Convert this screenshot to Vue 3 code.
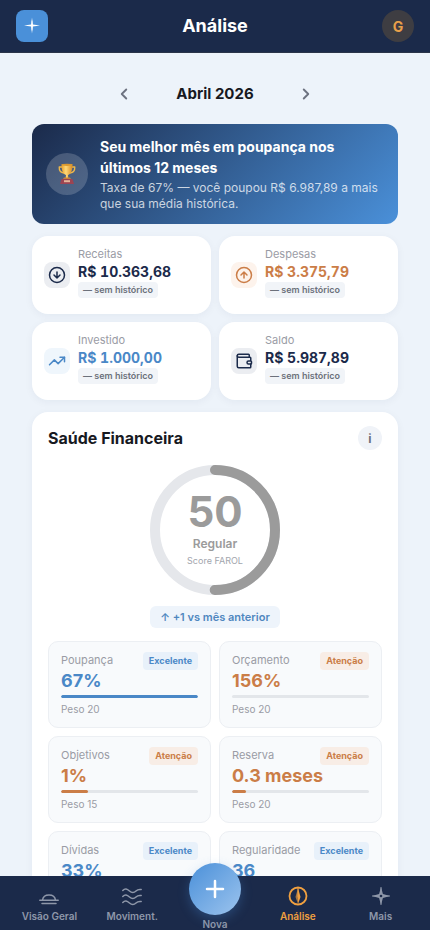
<script setup>
import { ref, computed } from 'vue'

const months = ['Janeiro', 'Fevereiro', 'Março', 'Abril', 'Maio', 'Junho', 'Julho', 'Agosto', 'Setembro', 'Outubro', 'Novembro', 'Dezembro']
const monthIndex = ref(2026 * 12 + 3)
const monthLabel = computed(() => `${months[monthIndex.value % 12]} ${Math.floor(monthIndex.value / 12)}`)

const totals = [
  { label: 'Receitas', value: 'R$ 10.363,68', tone: 'navy', icon: 'down' },
  { label: 'Despesas', value: 'R$ 3.375,79', tone: 'orange', icon: 'up' },
  { label: 'Investido', value: 'R$ 1.000,00', tone: 'blue', icon: 'trend' },
  { label: 'Saldo', value: 'R$ 5.987,89', tone: 'navy', icon: 'wallet' },
]

const score = 50
const circumference = 2 * Math.PI * 60
const dash = `${(circumference * score) / 100} ${circumference}`

const pillars = [
  { label: 'Poupança', value: '67%', status: 'Excelente', tone: 'blue', fill: 100, weight: 20 },
  { label: 'Orçamento', value: '156%', status: 'Atenção', tone: 'orange', fill: 0, weight: 20 },
  { label: 'Objetivos', value: '1%', status: 'Atenção', tone: 'orange', fill: 20, weight: 15 },
  { label: 'Reserva', value: '0.3 meses', status: 'Atenção', tone: 'orange', fill: 10, weight: 20 },
  { label: 'Dívidas', value: '33%', status: 'Excelente', tone: 'blue', fill: 100, weight: 15 },
  { label: 'Regularidade', value: '36', status: 'Excelente', tone: 'blue', fill: 100, weight: 10 },
]
</script>

<template>
  <div class="app">
    <header class="topbar">
      <a class="logo" href="#inicio" aria-label="Início">
        <svg width="18" height="18" viewBox="0 0 18 18" aria-hidden="true">
          <path d="M9 .5 9.900 7.600 17 8.500 9.900 9.400 9 16.500 8.100 9.400 1 8.500 8.100 7.600Z" fill="#fff" />
          <path d="M9 4v9M4.500 8.500h9" stroke="#fff" stroke-width="1" stroke-opacity=".7" />
        </svg>
      </a>
      <h1>Análise</h1>
      <button class="avatar" type="button">G</button>
    </header>

    <main class="content">
      <div class="month">
        <button type="button" aria-label="Mês anterior" @click="monthIndex--">
          <svg width="18" height="18" viewBox="0 0 24 24" aria-hidden="true"><path d="m15 18-6-6 6-6" /></svg>
        </button>
        <h2>{{ monthLabel }}</h2>
        <button type="button" aria-label="Próximo mês" @click="monthIndex++">
          <svg width="18" height="18" viewBox="0 0 24 24" aria-hidden="true"><path d="m9 18 6-6-6-6" /></svg>
        </button>
      </div>

      <section class="banner">
        <span class="trophy">
          <svg width="20" height="22" viewBox="0 0 20 22" aria-hidden="true">
            <defs>
              <linearGradient id="gold" x1="0" x2="1">
                <stop offset="0" stop-color="#e9a02c" />
                <stop offset=".4" stop-color="#ffd978" />
                <stop offset="1" stop-color="#d98a24" />
              </linearGradient>
            </defs>
            <path d="M5 4H2.200C2 8 3.500 9.600 7 10M15 4h2.800C18 8 16.500 9.600 13 10" fill="none" stroke="#eeb84c" stroke-width="1.300" stroke-linecap="round" />
            <path d="M4.500 1.500h11c0 5.500-1.400 9.500-4.500 10.500l.4 3.500h-2.800l.4-3.500C5.900 11 4.500 7 4.500 1.500Z" fill="url(#gold)" />
            <ellipse cx="10" cy="1.800" rx="5.500" ry="1.100" fill="#d9982f" />
            <path d="M7 14.500h6l1 1.500H6Z" fill="#c8813a" />
            <path d="M4.500 16h11l1.500 5h-14Z" fill="#9c4452" />
            <path d="M7 17.200h6v2H7Z" fill="#e6b59a" />
          </svg>
        </span>
        <div>
          <h3>Seu melhor mês em poupança nos últimos 12 meses</h3>
          <p>Taxa de 67% — você poupou R$ 6.987,89 a mais que sua média histórica.</p>
        </div>
      </section>

      <section class="totals" aria-label="Resumo do mês">
        <article v-for="t in totals" :key="t.label" class="total" :class="t.tone">
          <span class="total-icon">
            <svg width="18" height="18" viewBox="0 0 24 24" aria-hidden="true">
              <template v-if="t.icon === 'down'"><circle cx="12" cy="12" r="10" /><path d="M12 8v8M8 12l4 4 4-4" /></template>
              <template v-else-if="t.icon === 'up'"><circle cx="12" cy="12" r="10" /><path d="m16 12-4-4-4 4M12 16V8" /></template>
              <template v-else-if="t.icon === 'trend'"><path d="m22 7-8.500 8.500-5-5L2 17" /><path d="M16 7h6v6" /></template>
              <template v-else>
                <path d="M19 7V4a1 1 0 0 0-1-1H5a2 2 0 0 0 0 4h15a1 1 0 0 1 1 1v4h-3a2 2 0 0 0 0 4h3a1 1 0 0 0 1-1v-2a1 1 0 0 0-1-1" />
                <path d="M3 5v14a2 2 0 0 0 2 2h15a1 1 0 0 0 1-1v-4" />
              </template>
            </svg>
          </span>
          <div class="total-text">
            <span class="label">{{ t.label }}</span>
            <strong>{{ t.value }}</strong>
            <span class="delta">— sem histórico</span>
          </div>
        </article>
      </section>

      <section class="health">
        <div class="health-head">
          <h2>Saúde Financeira</h2>
          <button type="button" aria-label="Sobre o score">i</button>
        </div>

        <div class="gauge">
          <svg viewBox="0 0 130 130" aria-hidden="true">
            <circle cx="65" cy="65" r="60" class="track" />
            <circle cx="65" cy="65" r="60" class="arc" :stroke-dasharray="dash" transform="rotate(-90 65 65)" />
          </svg>
          <div class="gauge-text">
            <strong>{{ score }}</strong>
            <span class="rating">Regular</span>
            <span class="caption">Score FAROL</span>
          </div>
        </div>
        <p class="change">↑ +1 vs mês anterior</p>

        <div class="pillars">
          <article v-for="p in pillars" :key="p.label" class="pillar" :class="p.tone">
            <div class="pillar-head">
              <span class="label">{{ p.label }}</span>
              <span class="status">{{ p.status }}</span>
            </div>
            <strong>{{ p.value }}</strong>
            <div class="bar"><div class="fill" :style="{ width: p.fill + '%' }"></div></div>
            <span class="weight">Peso {{ p.weight }}</span>
          </article>
        </div>
      </section>
    </main>

    <nav class="tabs" aria-label="Principal">
      <a href="#geral">
        <svg width="20" height="20" viewBox="0 0 20 20" aria-hidden="true">
          <path d="M3.500 14C4 10.500 6.500 9 10 9s6 1.500 6.500 5M.8 14.200h18.400M3 17.500h14" />
        </svg>
        <span>Visão Geral</span>
      </a>
      <a href="#movimentos">
        <svg width="20" height="20" viewBox="0 0 20 20" aria-hidden="true">
          <path d="M.8 4.500C3 2 5 2.700 7.500 5s4.500 2 6.500 0 3-1.800 5.200-1.500M.8 10.500C3 8 5 8.700 7.500 11s4.500 2 6.500 0 3-1.800 5.200-1.500M.8 16.500C3 14 5 14.700 7.500 17s4.500 2 6.500 0 3-1.800 5.200-1.500" />
        </svg>
        <span>Moviment.</span>
      </a>
      <a href="#nova" class="new">
        <span class="fab">
          <svg width="24" height="24" viewBox="0 0 24 24" aria-hidden="true"><path d="M12 4v16M4 12h16" /></svg>
        </span>
        <span>Nova</span>
      </a>
      <a href="#analise" class="active" aria-current="page">
        <svg width="20" height="20" viewBox="0 0 20 20" aria-hidden="true">
          <circle cx="10" cy="10" r="8.500" stroke-width="1.800" />
          <path d="M10 2 12.500 11 10 18Z" fill="currentColor" stroke="none" />
          <path d="M10 2 7.500 11 10 18Z" fill="currentColor" fill-opacity=".65" stroke="none" />
          <path d="M10 2v9" stroke-width="1" />
        </svg>
        <span>Análise</span>
      </a>
      <a href="#mais">
        <svg width="20" height="20" viewBox="0 0 20 20" aria-hidden="true">
          <path d="M10 1 11.900 8.100 19 10 11.900 11.900 10 19 8.100 11.900 1 10 8.100 8.100Z" fill="currentColor" stroke="none" />
          <path d="M10 1.500v17M1.500 10h17" stroke-width="1" />
          <circle cx="10" cy="10" r="1.300" fill="#1b2a4a" stroke="none" />
        </svg>
        <span>Mais</span>
      </a>
    </nav>
  </div>
</template>

<style>
body {
  margin: 0;
  background: #edf3fa;
}
</style>

<style scoped>
.app {
  display: flex;
  flex-direction: column;
  height: 100vh;
  background: #edf3fa;
  color: #17191f;
  font-family: Inter, "Liberation Sans", sans-serif;
}
h1, h2, h3, p { margin: 0; }
button { border: 0; padding: 0; font: inherit; cursor: pointer; }
a { color: inherit; text-decoration: none; }
svg { display: block; fill: none; stroke-linecap: round; stroke-linejoin: round; }

.topbar {
  display: flex;
  flex: none;
  align-items: center;
  justify-content: space-between;
  padding: 10px 16px;
  border-bottom: 1px solid #2b3549;
  background: #1b2a4a;
}
.topbar h1 { color: #fff; font-size: 18px; font-weight: 700; line-height: 32px; }
.logo, .avatar {
  display: grid;
  place-items: center;
  width: 32px;
  height: 32px;
}
.logo { border-radius: 8px; background: #4a90d9; }
.avatar { border-radius: 50%; background: #3e3d42; color: #e9a04a; font-size: 14px; font-weight: 700; }

.content {
  flex: 1;
  min-height: 0;
  overflow-y: auto;
  scrollbar-width: none;
  padding: 23px 32px 32px;
}
.month { display: flex; align-items: center; justify-content: center; gap: 12px; margin-bottom: 12px; }
.month h2 { min-width: 122px; font-size: 15px; font-weight: 700; line-height: 36px; text-align: center; }
.month button { display: grid; place-items: center; width: 36px; height: 36px; background: none; }
.month svg { stroke: #6d7280; stroke-width: 2.5; }

.banner {
  display: flex;
  align-items: center;
  gap: 12px;
  padding: 12px 14px;
  border-radius: 12px;
  background: linear-gradient(135deg, #1b2a4a, #4a90d9);
}
.trophy {
  display: grid;
  flex: none;
  place-items: center;
  width: 42px;
  height: 42px;
  border-radius: 50%;
  background: rgba(255, 255, 255, 0.18);
}
.banner h3 { margin-bottom: 2px; color: #fff; font-size: 14px; font-weight: 700; line-height: 21px; }
.banner p { color: rgba(255, 255, 255, 0.75); font-size: 12px; line-height: 16px; }

.totals { display: grid; grid-template-columns: 1fr 1fr; gap: 8px; margin: 12px 0; }
.total {
  display: flex;
  align-items: center;
  gap: 8px;
  padding: 11px 12px;
  border-radius: 16px;
  background: #fff;
  box-shadow: 0 2px 8px rgba(27, 42, 74, 0.05);
}
.total-icon { display: grid; place-items: center; width: 26px; height: 26px; border-radius: 8px; background: #ebedf1; }
.total-icon svg { stroke: currentColor; stroke-width: 2; }
.total-text { display: flex; flex-direction: column; align-items: flex-start; padding-bottom: 5px; }
.label { color: #9a9ca5; font-size: 11px; line-height: 14px; }
.total strong { font-size: 14px; font-weight: 700; font-variant-numeric: tabular-nums; line-height: 21px; }
.delta {
  padding: 0 5px;
  border-radius: 4px;
  background: #f1f4f8;
  color: #6c717b;
  font-size: 9px;
  font-weight: 600;
  line-height: 16px;
}
.navy { color: #1b2a4a; }
.orange { color: #cb7d47; }
.blue { color: #4a88c7; }
.orange .total-icon { background: #fdf3ec; }
.blue .total-icon { background: #eff6fc; }

.health {
  padding: 14px 16px 16px;
  border-radius: 16px;
  background: #fff;
  box-shadow: 0 2px 8px rgba(27, 42, 74, 0.05);
}
.health-head { display: flex; align-items: center; justify-content: space-between; margin-bottom: 15px; }
.health-head h2 { font-size: 16px; font-weight: 700; line-height: 24px; }
.health-head button {
  width: 24px;
  height: 24px;
  border-radius: 50%;
  background: #f0f3f8;
  color: #6c717b;
  font-size: 12px;
  font-weight: 700;
}
.gauge { display: grid; width: 130px; margin: 0 auto 11px; }
.gauge > * { grid-area: 1 / 1; }
.gauge circle { stroke-width: 10; }
.track { stroke: #e5e7eb; }
.arc { stroke: #9b9b9b; }
.gauge-text {
  display: flex;
  flex-direction: column;
  align-items: center;
  justify-content: center;
  padding-bottom: 2px;
  color: #9b9b9b;
}
.gauge-text strong { font-size: 42px; font-weight: 700; line-height: 46px; }
.rating { font-size: 12px; font-weight: 600; line-height: 18px; }
.caption { color: #a2a5ad; font-size: 9px; line-height: 16px; }
.change {
  width: fit-content;
  margin: 0 auto 13px;
  padding: 0 10px;
  border-radius: 6px;
  background: #eef4fb;
  color: #4f87bf;
  font-size: 11px;
  font-weight: 600;
  line-height: 22px;
}

.pillars { display: grid; grid-template-columns: 1fr 1fr; gap: 8px; }
.pillar {
  display: flex;
  flex-direction: column;
  padding: 10px 12px;
  border: 1px solid #eceff3;
  border-radius: 10px;
  background: #f8fafc;
}
.pillar-head { display: flex; align-items: flex-start; justify-content: space-between; }
.pillar .label { line-height: 16px; }
.status { padding: 0 6px; border-radius: 4px; background: #e8f1fa; font-size: 9px; font-weight: 700; line-height: 18px; }
.orange .status { background: #f8ede6; }
.pillar strong { font-size: 18px; font-weight: 700; line-height: 22px; }
.bar { height: 3px; margin: 3px 0 4px; overflow: hidden; border-radius: 2px; background: #e3e6ea; }
.fill { height: 100%; border-radius: 2px; background: currentColor; }
.weight { color: #9a9ca5; font-size: 10px; line-height: 15px; }

.tabs {
  display: grid;
  flex: none;
  grid-template-columns: repeat(5, 1fr);
  padding: 0 8px;
  background: #1b2a4a;
  color: #8e97a9;
  font-size: 10px;
  font-weight: 600;
  line-height: 12px;
}
.tabs a {
  display: flex;
  flex-direction: column;
  align-items: center;
  gap: 4px;
  padding: 10px 0 8px;
}
.tabs svg { stroke: currentColor; stroke-width: 1.5; }
.tabs .active { color: #f0a040; }
.tabs .new { gap: 3px; margin-top: -13px; padding: 0; }
.fab {
  display: grid;
  place-items: center;
  width: 52px;
  height: 52px;
  border-radius: 50%;
  background: linear-gradient(135deg, #4a90d9, #9cc4ee);
  box-shadow: 0 4px 12px rgba(74, 144, 217, 0.3);
  color: #fff;
  position: relative;
}
.tabs .fab svg { stroke-width: 2.5; }
</style>
